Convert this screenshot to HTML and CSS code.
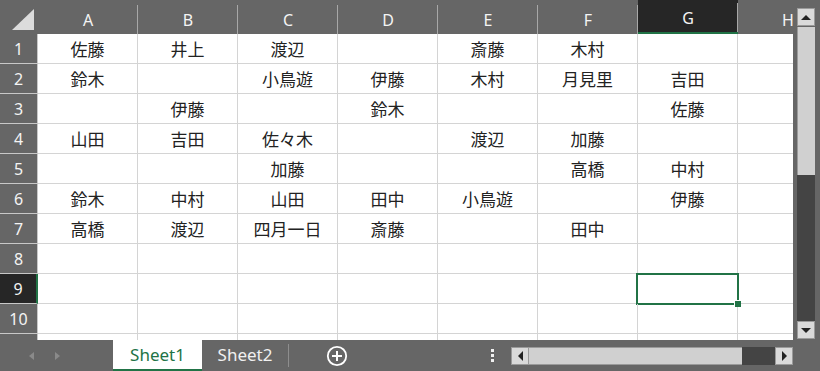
FILE: index.html
```html
<!DOCTYPE html>
<html lang="ja">
<head>
  <meta charset="UTF-8">
  <title>Sheet1</title>
  <link rel="stylesheet" href="styles.css">
</head>
<body>
  <div class="app">
    <div class="main">
      <div class="sheet" id="sheet"></div>
      <div class="vscroll">
        <div class="sbtn"><span class="arrow up"></span></div>
        <div class="vthumb"></div>
        <div class="vtrack"></div>
        <div class="sbtn"><span class="arrow down"></span></div>
      </div>
    </div>

    <div class="tabbar">
      <div class="nav">
        <span class="arrow left dim"></span>
        <span class="arrow right dim"></span>
      </div>
      <div class="tab active">Sheet1</div>
      <div class="tab">Sheet2</div>
      <div class="sep"></div>
      <div class="add">
        <svg width="22" height="22" viewBox="0 0 22 22">
          <circle cx="11" cy="11" r="9.2" fill="none" stroke="#fff" stroke-width="1.8"/>
          <path d="M11 6v10M6 11h10" stroke="#fff" stroke-width="2"/>
        </svg>
      </div>
      <div class="dots"><i></i><i></i><i></i></div>
      <div class="hscroll">
        <div class="sbtn"><span class="arrow left"></span></div>
        <div class="hthumb"></div>
        <div class="htrack"></div>
        <div class="sbtn"><span class="arrow right"></span></div>
      </div>
    </div>
  </div>

  <script>
    const cols = ['A', 'B', 'C', 'D', 'E', 'F', 'G', 'H'];
    const rows = [
      ['佐藤', '井上', '渡辺', '', '斎藤', '木村', ''],
      ['鈴木', '', '小鳥遊', '伊藤', '木村', '月見里', '吉田'],
      ['', '伊藤', '', '鈴木', '', '', '佐藤'],
      ['山田', '吉田', '佐々木', '', '渡辺', '加藤', ''],
      ['', '', '加藤', '', '', '高橋', '中村'],
      ['鈴木', '中村', '山田', '田中', '小鳥遊', '', '伊藤'],
      ['高橋', '渡辺', '四月一日', '斎藤', '', '田中', ''],
      [], [], []
    ];
    const activeCol = 6;
    const activeRow = 8;

    const sheet = document.getElementById('sheet');

    function add(cls, text) {
      const div = document.createElement('div');
      div.className = cls;
      if (text) div.textContent = text;
      sheet.appendChild(div);
      return div;
    }

    // Header row
    const corner = add('corner');
    corner.innerHTML = '<svg width="38" height="34" viewBox="0 0 38 34"><path d="M12 30H34V9Z" fill="#dcdcdc"/></svg>';
    cols.forEach((c, i) => {
      add('colhead' + (i === activeCol ? ' current' : ''), c);
    });

    // Data rows
    rows.forEach((row, r) => {
      add('rowhead' + (r === activeRow ? ' current' : ''), String(r + 1));
      for (let c = 0; c < 8; c++) {
        const cell = add('cell', row[c] || '');
        if (r === activeRow && c === activeCol) cell.classList.add('selected');
      }
    });

    // Partly visible row 11
    add('rowhead tail');
    for (let c = 0; c < 8; c++) add('cell tail');
  </script>
</body>
</html>
```

FILE: styles.css
```css
body {
  margin: 0;
  background-color: #666;
  font-family: "Noto Sans", "Noto Sans CJK JP", sans-serif;
}

.app {
  width: 820px;
  height: 371px;
  display: flex;
  flex-direction: column;
  overflow: hidden;
}

.main {
  display: flex;
  height: 340px;
}

/* Grid */

.sheet {
  width: 793px;
  flex-shrink: 0;
  display: grid;
  grid-template-columns: 38px repeat(8, 100px);
  grid-template-rows: 34px repeat(10, 30px) 6px;
  background-color: #fff;
  overflow: hidden;
}

.corner {
  background-color: #666;
}

.colhead {
  display: flex;
  align-items: center;
  justify-content: center;
  padding-top: 5px;
  box-sizing: border-box;
  background-color: #666;
  background-image: linear-gradient(#a8a8a8, #a8a8a8);
  background-size: 1px 29px;
  background-position: right bottom;
  background-repeat: no-repeat;
  color: #f4f4f4;
  font-size: 16px;
}

.colhead.current {
  background-color: #262626;
  border-bottom: 2px solid #217346;
  padding-top: 3px;
}

.rowhead {
  display: flex;
  align-items: center;
  justify-content: center;
  box-sizing: border-box;
  background-color: #666;
  border-right: 1px solid #c8c8c8;
  border-bottom: 1px solid #c8c8c8;
  color: #f4f4f4;
  font-size: 16px;
}

.rowhead.current {
  background-color: #262626;
  border-right: 2px solid #217346;
}

.cell {
  position: relative;
  display: flex;
  align-items: center;
  justify-content: center;
  box-sizing: border-box;
  border-right: 1px solid #d4d4d4;
  border-bottom: 1px solid #d4d4d4;
  color: #222;
  font-family: "Noto Sans CJK JP", sans-serif;
  font-size: 17px;
  white-space: nowrap;
}

.tail {
  border-bottom: none;
}

.selected::after {
  content: "";
  position: absolute;
  top: -1px;
  left: -2px;
  right: -2px;
  bottom: -2px;
  border: 2px solid #217346;
}

.selected::before {
  content: "";
  position: absolute;
  right: -4px;
  bottom: -4px;
  width: 6px;
  height: 6px;
  background-color: #217346;
  border: 1px solid #fff;
  border-right: none;
  border-bottom: none;
  z-index: 1;
}

/* Scroll bars */

.vscroll {
  width: 27px;
  box-sizing: border-box;
  padding: 8px 5px 1px 4px;
  display: flex;
  flex-direction: column;
}

.sbtn {
  display: flex;
  align-items: center;
  justify-content: center;
  width: 18px;
  height: 18px;
  box-sizing: border-box;
  background-color: #dadada;
  border: 1px solid #9a9a9a;
}

.vthumb {
  height: 148px;
  margin-top: 1px;
  background-color: #d0d0d0;
  border-left: 1px solid #9a9a9a;
}

.vtrack {
  flex: 1;
  background-color: #444;
}

.arrow {
  width: 0;
  height: 0;
  border: 5px solid transparent;
}

.arrow.up {
  border-bottom-color: #222;
  margin-top: -5px;
}

.arrow.down {
  border-top-color: #222;
  margin-bottom: -5px;
}

.arrow.left {
  border-right-color: #222;
  margin-left: -5px;
}

.arrow.right {
  border-left-color: #222;
  margin-right: -5px;
}

/* Sheet tabs */

.tabbar {
  flex: 1;
  display: flex;
  align-items: stretch;
}

.nav {
  width: 113px;
  display: flex;
  align-items: center;
  padding-left: 29px;
  gap: 21px;
  box-sizing: border-box;
}

.arrow.dim {
  border-width: 4px 5px;
}

.arrow.left.dim {
  border-right-color: #8a8a8a;
}

.arrow.right.dim {
  border-left-color: #8a8a8a;
}

.tab {
  display: flex;
  align-items: center;
  justify-content: center;
  width: 86px;
  padding-bottom: 2px;
  box-sizing: border-box;
  color: #f0f0f0;
  font-size: 17px;
}

.tab.active {
  width: 89px;
  background-color: #fff;
  color: #217346;
  border-bottom: 2px solid #217346;
  padding-bottom: 0;
}

.sep {
  width: 1px;
  margin: 4px 0 4px;
  background-color: #8e8e8e;
}

.add {
  display: flex;
  align-items: center;
  margin-left: 37px;
}

.dots {
  display: flex;
  flex-direction: column;
  justify-content: center;
  gap: 2px;
  margin-left: 143px;
}

.dots i {
  display: block;
  width: 3px;
  height: 3px;
  background-color: #f0f0f0;
}

.hscroll {
  display: flex;
  height: 18px;
  margin-top: 7px;
  margin-left: 17px;
  width: 282px;
}

.hthumb {
  flex: 1;
  background-color: #d0d0d0;
  border-top: 1px solid #9a9a9a;
  border-bottom: 1px solid #9a9a9a;
}

.htrack {
  width: 33px;
  background-color: #444;
}
```
